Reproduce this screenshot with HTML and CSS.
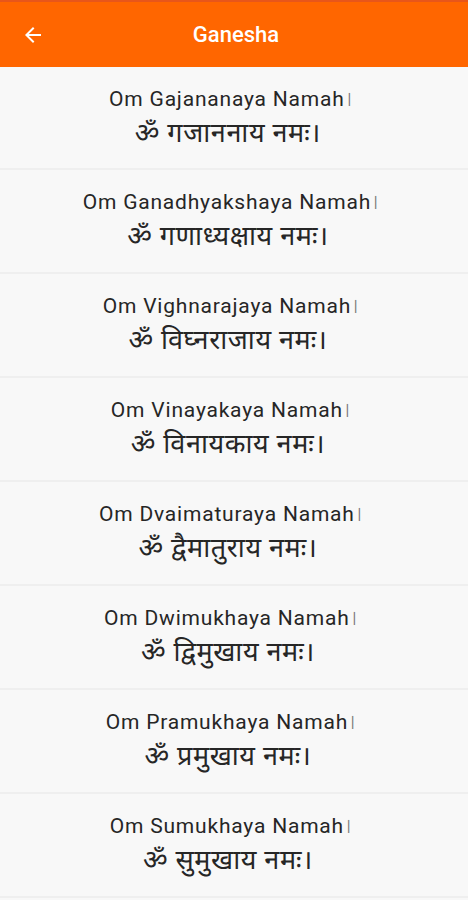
FILE: index.html
```html
<!DOCTYPE html>
<html lang="en">
<head>
  <meta charset="UTF-8" />
  <meta name="viewport" content="width=device-width, initial-scale=1.0"/>
  <title>Ganesha</title>
  <link rel="stylesheet" href="styles.css">
</head>
<body>
  <header class="appbar">
    <button class="back" aria-label="Back">
      <svg width="24" height="24" viewBox="0 0 24 24"><path d="M20 11H7.83l5.59-5.59L12 4l-8 8 8 8 1.41-1.41L7.83 13H20v-2z" fill="#fff"/></svg>
    </button>
    <h1>Ganesha</h1>
  </header>

  <ul class="mantras">
    <li><p class="en">Om Gajananaya Namah<span class="danda">।</span></p><p class="hi">ॐ गजाननाय नमः।</p></li>
    <li><p class="en">Om Ganadhyakshaya Namah<span class="danda">।</span></p><p class="hi">ॐ गणाध्यक्षाय नमः।</p></li>
    <li><p class="en">Om Vighnarajaya Namah<span class="danda">।</span></p><p class="hi">ॐ विघ्नराजाय नमः।</p></li>
    <li><p class="en">Om Vinayakaya Namah<span class="danda">।</span></p><p class="hi">ॐ विनायकाय नमः।</p></li>
    <li><p class="en">Om Dvaimaturaya Namah<span class="danda">।</span></p><p class="hi">ॐ द्वैमातुराय नमः।</p></li>
    <li><p class="en">Om Dwimukhaya Namah<span class="danda">।</span></p><p class="hi">ॐ द्विमुखाय नमः।</p></li>
    <li><p class="en">Om Pramukhaya Namah<span class="danda">।</span></p><p class="hi">ॐ प्रमुखाय नमः।</p></li>
    <li><p class="en">Om Sumukhaya Namah<span class="danda">।</span></p><p class="hi">ॐ सुमुखाय नमः।</p></li>
  </ul>
</body>
</html>
```

FILE: styles.css
```css
* { box-sizing: border-box; margin: 0; padding: 0; }
body { font-family: Roboto, "Noto Sans", sans-serif; background: #f8f8f8; color: #222; overflow: hidden; }
.appbar { height: 67px; background: #ff6600; border-top: 2px solid #e8561a; display: flex; align-items: center; justify-content: center; position: relative; }
.appbar h1 { color: #fff; font-size: 22px; font-weight: 500; margin-left: 4px; }
.back { position: absolute; left: 21px; top: 21px; background: none; border: none; display: flex; }
.mantras { list-style: none; }
.mantras li { height: 104px; border-bottom: 2px solid #efefef; display: flex; flex-direction: column; align-items: center; justify-content: center; text-align: center; }
.mantras li:first-child { height: 103px; }
.en { font-size: 21px; line-height: 30px; letter-spacing: 0.8px; color: #262626; margin-right: 6px; }
.danda { color: #777; font-weight: 300; }
.hi { font-size: 27px; line-height: 38px; letter-spacing: 0.6px; font-weight: 400; color: #262626; margin-right: 12px; }
```
